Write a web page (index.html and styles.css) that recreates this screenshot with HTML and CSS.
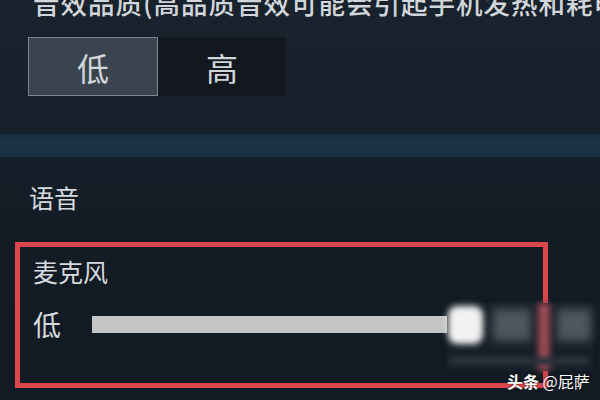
FILE: index.html
```html
<!DOCTYPE html>
<html lang="zh">
<head>
<meta charset="utf-8">
<link rel="stylesheet" href="styles.css">
</head>
<body>
<div class="page">
  <div class="quality">
    <div class="q-title">音效品质(高品质音效可能会引起手机发热和耗电)</div>
    <div class="seg">
      <div class="seg-btn on">低</div>
      <div class="seg-btn">高</div>
    </div>
  </div>
  <div class="band"></div>
  <div class="voice">
    <div class="v-title">语音</div>
    <div class="redbox">
      <div class="mic">麦克风</div>
      <div class="slider-row">
        <span class="lo">低</span>
        <div class="track"></div>
      </div>
    </div>
  </div>
  <div class="blur-patch">
    <div class="knob"></div>
    <div class="blk b1"></div>
    <div class="blk b3"></div>
    <div class="redline"></div>
    <div class="subline"></div>
  </div>
  <div class="wm"><b>头条</b> @屁萨</div>
</div>
</body>
</html>
```
FILE: styles.css
```css
html, body {
  margin: 0;
  padding: 0;
}
body {
  width: 600px;
  height: 400px;
  overflow: hidden;
  background: #141d26;
  font-family: "Noto Sans CJK SC", "Noto Sans", sans-serif;
  color: #d4d8dc;
}
.page {
  position: relative;
  width: 600px;
  height: 400px;
  overflow: hidden;
  background: linear-gradient(180deg, #18232d 0%, #16202a 35%, #131c25 60%, #121a23 100%);
}
.quality {
  padding-left: 28px;
  padding-top: 1px;
}
.q-title {
  font-size: 26.5px;
  line-height: 26px;
  margin-top: -11px;
  padding-left: 5px;
  white-space: nowrap;
  letter-spacing: 1px;
  color: #d2d6da;
  font-weight: 500;
}
.seg {
  display: flex;
  margin-top: 21px;
  width: 258px;
  height: 59px;
}
.seg-btn {
  flex: 0 0 128px;
  display: flex;
  align-items: center;
  justify-content: center;
  font-size: 32px;
  color: #d2d6da;
  background: #12181e;
}
.seg-btn.on {
  flex: 0 0 130px;
  box-sizing: border-box;
  background: #3a444e;
  border: 1px solid #7c868f;
}
.band {
  margin-top: 38px;
  height: 23px;
  background: linear-gradient(180deg, #192d3d 0%, #1c3447 50%, #1a3042 100%);
}
.voice {
  padding-left: 15px;
  padding-top: 25px;
}
.v-title {
  margin-left: 14px;
  font-size: 25px;
  line-height: 30px;
  color: #d6dade;
}
.redbox {
  margin-top: 30px;
  width: 533px;
  height: 146px;
  box-sizing: border-box;
  border: 5px solid #d9464c;
  padding: 9px 13px 0;
}
.mic {
  font-size: 25px;
  line-height: 30px;
  color: #d6dade;
}
.slider-row {
  display: flex;
  align-items: center;
  margin-top: 22px;
}
.lo {
  font-size: 28px;
  line-height: 32px;
  color: #d6dade;
}
.track {
  margin-left: 31px;
  width: 360px;
  height: 17px;
  background: #c2c4c5;
}
.blur-patch {
  position: absolute;
  left: 447px;
  top: 303px;
  width: 146px;
  height: 68px;
  background: #171f28;
}
.knob {
  position: absolute;
  left: 1px;
  top: 3px;
  width: 35px;
  height: 38px;
  border-radius: 9px;
  background: #f2f2f2;
  filter: blur(3px);
}
.blk {
  position: absolute;
  top: 6px;
  height: 32px;
  background: #50575f;
  filter: blur(5px);
}
.b1 { left: 46px; width: 38px; }
.b3 { left: 110px; width: 34px; }
.redline {
  position: absolute;
  left: 91px;
  top: 0;
  width: 12px;
  height: 68px;
  background: #9a4a54;
  filter: blur(3px);
}
.subline {
  position: absolute;
  left: 2px;
  top: 54px;
  width: 140px;
  height: 8px;
  background: #2a323b;
  filter: blur(2.5px);
}
.wm {
  position: absolute;
  left: 507px;
  top: 370px;
  font-size: 16px;
  line-height: 22px;
  color: #ffffff;
  text-shadow: 0 0 2px rgba(0,0,0,0.7);
  white-space: nowrap;
}
.wm b {
  font-weight: 700;
}
```
